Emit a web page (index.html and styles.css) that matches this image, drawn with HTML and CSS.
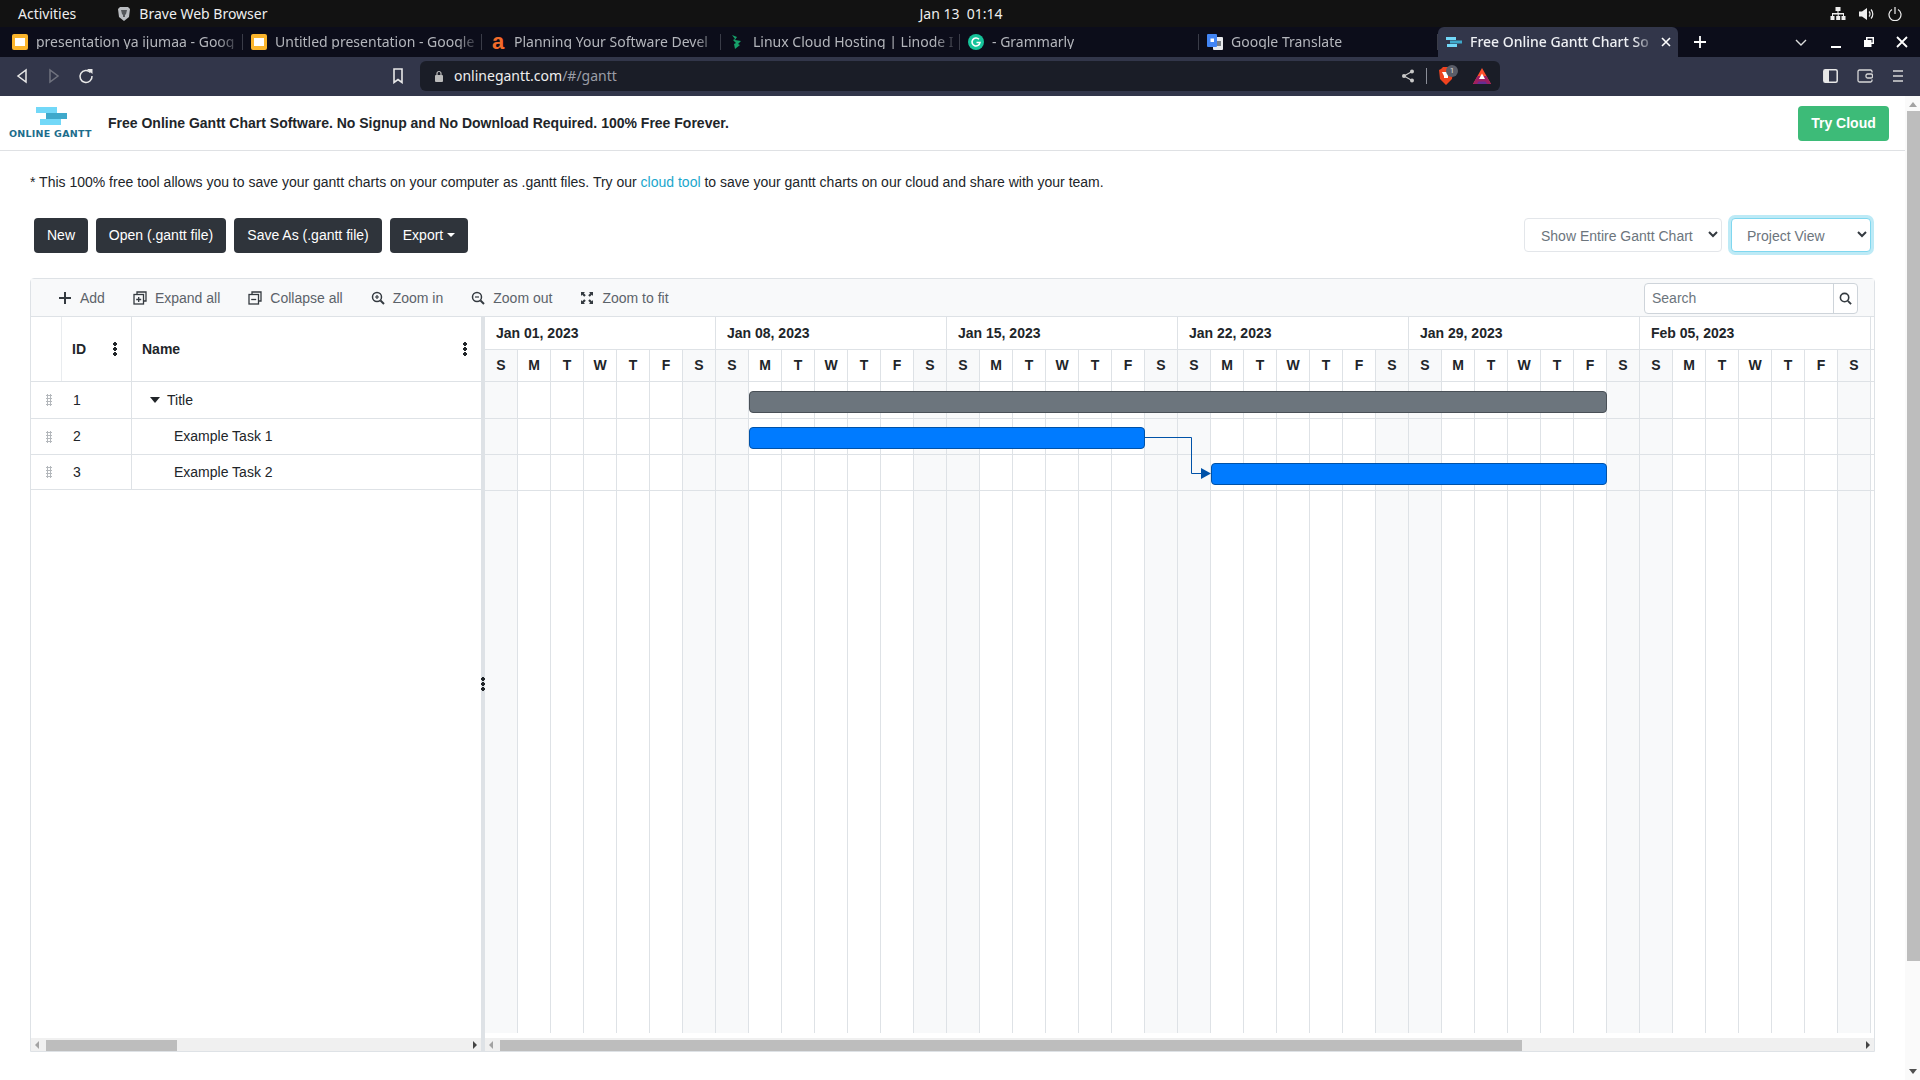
FILE: index.html
```html
<!DOCTYPE html>
<html lang="en">
<head>
<meta charset="utf-8">
<title>Free Online Gantt Chart Software</title>
<link rel="stylesheet" href="styles.css">
</head>
<body>
<div class="sysbar">
  <span class="activities">Activities</span>
  <span class="appname">
    <svg class="lion" viewBox="0 0 14 16"><path d="M3 1h8l2 2-1 8-5 4-5-4-1-8z" fill="#b9bcc0"/><path d="M4 4h6l-1 4-1 1v2H6V9L5 8z" fill="#55585c"/></svg>
    Brave Web Browser
  </span>
  <span class="clock">Jan 13&nbsp;&nbsp;01:14</span>
  <span class="status">
    <svg viewBox="0 0 16 14" width="16" height="14"><path d="M5.500 0h5v4h-2v2h5.500v3h1.500v4h-4V9h1.500V7.500H8.700V9h1.500v4h-4V9h1.500V7.500H3V9h1.500v4h-4V9H2V6h5.500V4h-2z" fill="#eee"/></svg>
    <svg viewBox="0 0 16 14" width="16" height="14"><path d="M0 4.500h3L8 1v12L3 9.500H0z" fill="#eee"/><path d="M10 4.500a3.500 3.500 0 0 1 0 5M12 2.500a6.500 6.500 0 0 1 0 9" fill="none" stroke="#eee" stroke-width="1.200"/></svg>
    <svg viewBox="0 0 14 14" width="14" height="14"><path d="M4 2.500a6 6 0 1 0 6 0M7 0v7" fill="none" stroke="#eee" stroke-width="1.200"/></svg>
  </span>
</div>

<div class="tabstrip">
  <div class="tab"><svg class="favicon" viewBox="0 0 16 16"><rect width="16" height="16" rx="2" fill="#fbb52c"/><rect x="3" y="4" width="10" height="8" fill="#fff"/></svg><span class="tab-title">presentation ya ijumaa - Goog</span></div>
  <div class="tab"><svg class="favicon" viewBox="0 0 16 16"><rect width="16" height="16" rx="2" fill="#fbb52c"/><rect x="3" y="4" width="10" height="8" fill="#fff"/></svg><span class="tab-title">Untitled presentation - Google</span></div>
  <div class="tab"><span class="favicon fav-a">a</span><span class="tab-title">Planning Your Software Devel</span></div>
  <div class="tab"><svg class="favicon" viewBox="0 0 16 16"><path d="M3 1l5 2-2 3 6 1-3 3 2 1-5 4-1-5 2-1-3-3 2-1z" fill="#17a06a"/></svg><span class="tab-title">Linux Cloud Hosting | Linode I</span></div>
  <div class="tab"><svg class="favicon" viewBox="0 0 16 16"><circle cx="8" cy="8" r="8" fill="#15c39a"/><path d="M11 5.300A4 4 0 1 0 12 8.500H8.500" fill="none" stroke="#fff" stroke-width="1.600"/></svg><span class="tab-title">- Grammarly</span></div>
  <div class="tab"><svg class="favicon" viewBox="0 0 16 16"><rect x="6" y="3" width="10" height="13" rx="1" fill="#e8eaed"/><rect width="10" height="13" rx="1" fill="#4285f4"/><rect x="3.500" y="4.500" width="3.500" height="3.500" fill="#fff"/><rect x="10" y="7" width="4" height="5" fill="#7a7f85"/></svg><span class="tab-title">Google Translate</span></div>
  <div class="tab tab-active">
    <svg class="favicon" viewBox="0 0 16 16"><rect x="0" y="3" width="10" height="3" fill="#72d8f8"/><rect x="4" y="6.500" width="12" height="3" fill="#3fa9cb"/><rect x="1" y="10" width="10" height="3" fill="#72d8f8"/></svg>
    <span class="tab-title">Free Online Gantt Chart So</span>
    <svg class="tab-close" viewBox="0 0 10 10"><path d="M1 1l8 8M9 1l-8 8" stroke="#fff" stroke-width="1.600"/></svg>
  </div>
  <svg class="newtab" viewBox="0 0 12 12"><path d="M6 0v12M0 6h12" stroke="#fff" stroke-width="1.800"/></svg>
  <div class="wincontrols">
    <svg class="win-chevron" width="12" height="12" viewBox="0 0 12 12"><path d="M1 4l5 5 5-5" fill="none" stroke="#ddd" stroke-width="1.400"/></svg>
    <svg width="12" height="12" viewBox="0 0 12 12"><path d="M1 11h10" stroke="#fff" stroke-width="2"/></svg>
    <svg width="12" height="12" viewBox="0 0 12 12"><path d="M3 1h8v7H8.500v3H1V4h2z M4.500 2.500V4h4v2.500h1v-4z" fill="#fff" fill-rule="evenodd"/></svg>
    <svg width="12" height="12" viewBox="0 0 12 12"><path d="M1 1l10 10M11 1L1 11" stroke="#fff" stroke-width="1.800"/></svg>
  </div>
</div>

<div class="navbar">
  <svg class="nav-ico back" viewBox="0 0 12 16"><path d="M10 2v12L2 8z" fill="none" stroke="#e8e8e8" stroke-width="1.500"/></svg>
  <svg class="nav-ico fwd" viewBox="0 0 12 16"><path d="M2 2v12l8-6z" fill="none" stroke="#70737f" stroke-width="1.500"/></svg>
  <svg class="nav-ico reload" viewBox="0 0 16 16"><path d="M12.500 4.500A6 6 0 1 0 14 8" fill="none" stroke="#e8e8e8" stroke-width="1.500"/><path d="M9 1h5.500v5z" fill="#e8e8e8"/></svg>
  <svg class="nav-ico bookmark" viewBox="0 0 12 16"><path d="M2 1h8v13.500l-4-3-4 3z" fill="none" stroke="#e8e8e8" stroke-width="1.600"/></svg>
  <div class="addressbar">
    <svg class="lock" viewBox="0 0 10 12"><path d="M3 5V3.500a2 2 0 0 1 4 0V5" fill="none" stroke="#bbb" stroke-width="1.200"/><rect x="1" y="5" width="8" height="7" rx="1" fill="#bbb"/></svg>
    <span class="url">onlinegantt.com<span class="url-dim">/#/gantt</span></span>
    <svg class="share" viewBox="0 0 14 14"><path d="M11 2.500L3 7l8 4.500" fill="none" stroke="#c8c8c8" stroke-width="1.200"/><circle cx="11" cy="2.500" r="2" fill="#c8c8c8"/><circle cx="3" cy="7" r="2" fill="#c8c8c8"/><circle cx="11" cy="11.500" r="2" fill="#c8c8c8"/></svg>
    <span class="addr-sep"></span>
    <span class="shield">
      <svg viewBox="0 0 14 18" width="14" height="18"><path d="M2 2l2-2h6l2 2 2 1-1 9-6 6-6-6-1-9z" fill="#f0431f"/><path d="M3 5h8L9 9v2H5V9z" fill="#fff"/></svg>
      <span class="badge">1</span>
    </span>
    <svg class="bat" viewBox="0 0 18 16"><path d="M9 0l9 16H0z" fill="#ff4f2b"/><path d="M0 16l4.500-8h9L18 16z" fill="#9e1f63"/><path d="M4 16l1.500-2.500h7L14 16z" fill="#662d91"/><path d="M9 5.500l3 5.500H6z" fill="#fff"/></svg>
  </div>
  <div class="nav-right">
    <svg width="15" height="14" viewBox="0 0 15 14"><rect x=".8" y=".8" width="13.400" height="12.400" rx="1.500" fill="none" stroke="#e8e8e8" stroke-width="1.500"/><rect x="1" y="1" width="5" height="12" fill="#e8e8e8"/></svg>
    <svg width="16" height="14" viewBox="0 0 16 14"><path d="M15 3.500V2.500A1.500 1.500 0 0 0 13.500 1h-11A1.500 1.500 0 0 0 1 2.500v9A1.500 1.500 0 0 0 2.500 13h11a1.500 1.500 0 0 0 1.500-1.500v-1" fill="none" stroke="#d8d8d8" stroke-width="1.300"/><rect x="9" y="5" width="6.500" height="4" rx="1.500" fill="none" stroke="#d8d8d8" stroke-width="1.300"/></svg>
    <svg width="12" height="14" viewBox="0 0 12 14"><path d="M1 2h10M1 7h10M1 12h10" stroke="#d8d8d8" stroke-width="1.600"/></svg>
  </div>
</div>

<div class="viewport">
  <main class="page">
    <header class="site-header">
      <div class="logo">
        <div class="logo-bars"><i class="lb lb1"></i><i class="lb lb2"></i><i class="lb lb3"></i></div>
        <span class="logo-text">ONLINE GANTT</span>
      </div>
      <strong class="tagline">Free Online Gantt Chart Software. No Signup and No Download Required. 100% Free Forever.</strong>
      <a class="try-cloud">Try Cloud</a>
    </header>

    <p class="note">* This 100% free tool allows you to save your gantt charts on your computer as .gantt files. Try our <a class="link">cloud tool</a> to save your gantt charts on our cloud and share with your team.</p>

    <div class="actions">
      <button class="btn">New</button>
      <button class="btn btn-open">Open (.gantt file)</button>
      <button class="btn btn-save">Save As (.gantt file)</button>
      <button class="btn btn-export">Export<i class="caret"></i></button>
      <div class="selects">
        <div class="select sel-range">Show Entire Gantt Chart<svg class="chev" viewBox="0 0 10 7"><path d="M1 1l4 4 4-4" fill="none" stroke="#343a40" stroke-width="2"/></svg></div>
        <div class="select sel-view">Project View<svg class="chev" viewBox="0 0 10 7"><path d="M1 1l4 4 4-4" fill="none" stroke="#343a40" stroke-width="2"/></svg></div>
      </div>
    </div>

    <section class="gantt">
      <div class="gantt-toolbar">
        <span class="tool"><svg class="ti" viewBox="0 0 14 14"><path d="M7 1v12M1 7h12" stroke="#343a40" stroke-width="2"/></svg>Add</span>
        <span class="tool"><svg class="ti" viewBox="0 0 14 14"><path d="M4 3V1h9v9h-2" fill="none" stroke="#343a40" stroke-width="1.300"/><rect x="1" y="3.500" width="9.500" height="9.500" fill="none" stroke="#343a40" stroke-width="1.300"/><path d="M5.700 6v5M3.200 8.500h5" stroke="#343a40" stroke-width="1.300"/></svg>Expand all</span>
        <span class="tool"><svg class="ti" viewBox="0 0 14 14"><path d="M4 3V1h9v9h-2" fill="none" stroke="#343a40" stroke-width="1.300"/><rect x="1" y="3.500" width="9.500" height="9.500" fill="none" stroke="#343a40" stroke-width="1.300"/><path d="M3.200 8.500h5" stroke="#343a40" stroke-width="1.300"/></svg>Collapse all</span>
        <span class="tool"><svg class="ti" viewBox="0 0 14 14"><circle cx="6" cy="6" r="4.500" fill="none" stroke="#343a40" stroke-width="1.500"/><path d="M9.500 9.500L13 13" stroke="#343a40" stroke-width="2"/><path d="M6 4v4M4 6h4" stroke="#343a40" stroke-width="1.200"/></svg>Zoom in</span>
        <span class="tool"><svg class="ti" viewBox="0 0 14 14"><circle cx="6" cy="6" r="4.500" fill="none" stroke="#343a40" stroke-width="1.500"/><path d="M9.500 9.500L13 13" stroke="#343a40" stroke-width="2"/><path d="M4 6h4" stroke="#343a40" stroke-width="1.200"/></svg>Zoom out</span>
        <span class="tool"><svg class="ti" viewBox="0 0 14 14"><path d="M1 1h4L3.800 2.200l2 2-1.600 1.600-2-2L1 5zM13 1v4l-1.200-1.200-2 2-1.600-1.600 2-2L9 1zM1 13V9l1.200 1.200 2-2 1.600 1.600-2 2L5 13zM13 13H9l1.200-1.200-2-2 1.600-1.600 2 2L13 9z" fill="#343a40"/></svg>Zoom to fit</span>
        <div class="search">
          <span class="search-input">Search</span>
          <span class="search-btn"><svg viewBox="0 0 14 14" width="13" height="13"><circle cx="6" cy="6" r="4.500" fill="none" stroke="#343a40" stroke-width="1.700"/><path d="M9.500 9.500L13 13" stroke="#343a40" stroke-width="2"/></svg></span>
        </div>
      </div>

      <div class="gantt-main">
        <div class="task-panel">
          <div class="task-head">
            <div class="c-drag"></div>
            <div class="c-id"><b>ID</b><i class="kebab"></i></div>
            <div class="c-name"><b>Name</b><i class="kebab"></i></div>
          </div>
          <div class="task-row r1">
            <div class="c-drag"><i class="grip"></i></div>
            <div class="c-id">1</div>
            <div class="c-name name-parent"><i class="tri"></i>Title</div>
          </div>
          <div class="task-row r2">
            <div class="c-drag"><i class="grip"></i></div>
            <div class="c-id">2</div>
            <div class="c-name name-child">Example Task 1</div>
          </div>
          <div class="task-row r3">
            <div class="c-drag"><i class="grip"></i></div>
            <div class="c-id">3</div>
            <div class="c-name name-child">Example Task 2</div>
          </div>
          <div class="panel-fill"></div>
          <div class="hscroll">
            <i class="arrow-l"></i><span class="thumb thumb-left"></span><span class="fill"></span><i class="arrow-r"></i>
          </div>
        </div>

        <div class="splitter"><i class="kebab kebab-split"></i></div>

        <div class="timeline">
          <div class="tl-head">
            <div class="month">Jan 01, 2023</div><div class="month">Jan 08, 2023</div><div class="month">Jan 15, 2023</div><div class="month">Jan 22, 2023</div><div class="month">Jan 29, 2023</div><div class="month">Feb 05, 2023</div>
            <div class="day we">S</div><div class="day">M</div><div class="day">T</div><div class="day">W</div><div class="day">T</div><div class="day">F</div><div class="day we">S</div>
            <div class="day we">S</div><div class="day">M</div><div class="day">T</div><div class="day">W</div><div class="day">T</div><div class="day">F</div><div class="day we">S</div>
            <div class="day we">S</div><div class="day">M</div><div class="day">T</div><div class="day">W</div><div class="day">T</div><div class="day">F</div><div class="day we">S</div>
            <div class="day we">S</div><div class="day">M</div><div class="day">T</div><div class="day">W</div><div class="day">T</div><div class="day">F</div><div class="day we">S</div>
            <div class="day we">S</div><div class="day">M</div><div class="day">T</div><div class="day">W</div><div class="day">T</div><div class="day">F</div><div class="day we">S</div>
            <div class="day we">S</div><div class="day">M</div><div class="day">T</div><div class="day">W</div><div class="day">T</div><div class="day">F</div><div class="day we">S</div>
          </div>
          <div class="tl-body">
            <div class="tl-row h37"></div>
            <div class="tl-row h36"></div>
            <div class="tl-row h36"></div>
            <div class="bar bar-parent"></div>
            <div class="bar bar-t1"></div>
            <div class="bar bar-t2"></div>
            <svg class="link-line" viewBox="0 0 70 50"><path d="M0 .5h46.500v36H56" fill="none" stroke="#0052a8" stroke-width="1"/><path d="M56 31l10 5.500-10 5.500z" fill="#0052a8"/></svg>
          </div>
          <div class="tl-gap"></div>
          <div class="hscroll">
            <i class="arrow-l"></i><span class="thumb thumb-right"></span><span class="fill"></span><i class="arrow-r"></i>
          </div>
        </div>
      </div>
    </section>
  </main>
  <aside class="page-scroll">
    <i class="ps-up"></i>
    <span class="ps-thumb"></span>
    <span class="fill"></span>
    <i class="ps-down"></i>
  </aside>
</div>
</body>
</html>
```
FILE: styles.css
```css
* { box-sizing: border-box; }
html, body { margin: 0; padding: 0; }
body {
  width: 1920px; height: 1080px; overflow: hidden;
  display: flex; flex-direction: column;
  font: 14px/1.5 "Liberation Sans", Arial, sans-serif;
  color: #212529; background: #fff;
}

/* system bar */
.sysbar {
  height: 27px; flex: none; background: #121212; color: #eee;
  display: flex; align-items: center;
  font: 14px/1 "Noto Sans", Roboto, sans-serif;
}
.activities { margin-left: 18px; }
.appname { margin-left: 41px; display: flex; align-items: center; gap: 8px; }
.lion { width: 14px; height: 16px; }
.clock { margin-left: 652px; color: #eee; }
.status { margin-left: auto; margin-right: 18px; display: flex; gap: 13px; align-items: center; }

/* tabs */
.tabstrip {
  height: 30px; flex: none; background: #0c0d1a;
  display: flex; align-items: center; padding-left: 4px;
  font: 14px/1 "Noto Sans", Roboto, sans-serif;
}
.tab {
  width: 239px; height: 30px; flex: none; display: flex; align-items: center;
  padding-left: 8px; gap: 8px; color: #b4b6bc; position: relative;
}
.tab::after {
  content: ""; position: absolute; right: 0; top: 7px; height: 16px; width: 1px; background: #3a3c48;
}
.favicon { width: 16px; height: 16px; flex: none; }
.fav-a { color: #f26b2a; font: 700 22px/16px "Liberation Sans", sans-serif; text-align: center; }
.tab-title {
  white-space: nowrap; width: 206px;
  -webkit-mask-image: linear-gradient(90deg, #000 88%, transparent 100%);
  mask-image: linear-gradient(90deg, #000 88%, transparent 100%);
}
.tab-active {
  width: 240px; background: #32364a; border-radius: 6px 6px 0 0; color: #eef0f4; font-weight: 500;
}
.tab-active::after { display: none; }
.tab-active .tab-title { width: 186px; }
.tab-close { width: 10px; height: 10px; flex: none; margin-left: -3px; }
.newtab { width: 12px; height: 12px; margin-left: 16px; flex: none; }
.wincontrols { margin-left: auto; margin-right: 12px; display: flex; gap: 21px; align-items: center; }
.win-chevron { margin-right: 2px; }

/* nav bar */
.navbar {
  height: 39px; flex: none; background: #32364a; display: flex; align-items: center; padding-bottom: 1px;
  font: 14px/1 "Noto Sans", Roboto, sans-serif;
}
.nav-ico { height: 16px; width: 12px; flex: none; }
.back { margin-left: 16px; }
.fwd { margin-left: 20px; }
.reload { margin-left: 18px; width: 16px; }
.bookmark { margin-left: 298px; }
.addressbar {
  width: 1080px; height: 30px; margin-left: 16px; background: #1a1d27; border-radius: 6px;
  display: flex; align-items: center; padding-left: 14px; color: #eee;
}
.lock { width: 10px; height: 12px; flex: none; }
.url { margin-left: 10px; }
.url-dim { color: #9a9da6; }
.share { width: 14px; height: 14px; margin-left: auto; flex: none; }
.addr-sep { width: 1px; height: 16px; background: #8b8e98; margin-left: 11px; }
.shield { position: relative; margin-left: 12px; width: 14px; height: 18px; display: block; }
.badge {
  position: absolute; left: 7px; top: -2px; width: 12px; height: 12px; border-radius: 50%;
  background: #5a5d68; color: #ddd; font: 8px/12px Roboto, sans-serif; text-align: center;
}
.bat { width: 18px; height: 16px; margin-left: 20px; margin-right: 9px; flex: none; }
.nav-right { margin-left: auto; margin-right: 16px; display: flex; gap: 19px; align-items: center; }

/* viewport */
.viewport { flex: 1; display: flex; min-height: 0; }
.page { flex: 1; min-width: 0; display: flex; flex-direction: column; }

.site-header {
  height: 55px; flex: none; display: flex; align-items: center; border-bottom: 1px solid #dfe1e4;
  padding: 0 16px 0 9px;
}
.logo { width: 81px; display: flex; flex-direction: column; height: 34px; }
.logo-bars { display: flex; flex-direction: column; height: 19px; margin-left: 27px; margin-top: 1px; }
.lb { display: block; height: 5.500px; width: 21px; }
.lb1 { background: #72d8f8; }
.lb2 { background: #3fa9cb; margin-left: 10px; margin-top: .5px; }
.lb3 { background: #72d8f8; margin-left: 4px; margin-top: .5px; }
.logo-text {
  font: 700 9.500px/10px "DejaVu Sans", sans-serif; letter-spacing: .25px; color: #1d6d8c; white-space: nowrap; margin-top: 3px;
}
.tagline { margin-left: 18px; font-weight: 700; }
.try-cloud {
  margin-left: auto; width: 91px; height: 35px; background: #3dbb78; color: #fff; border-radius: 4px;
  font-weight: 700; text-align: center; line-height: 35px;
}

.note { margin: 21px 0 0 30px; height: 21px; line-height: 21px; }
.link { color: #1ba6cc; }

.actions { margin: 25px 0 0 34px; display: flex; gap: 8px; height: 35px; width: 1837px; }
.btn {
  height: 35px; width: 54px; padding: 0; background: #2f343b; color: #fff; border: 0; border-radius: 4px;
  font: 14px/35px "Liberation Sans", sans-serif;
}
.btn-open { width: 130px; }
.btn-save { width: 148px; }
.btn-export { width: 78px; }
.caret {
  display: inline-block; margin-left: 4px; vertical-align: 3px;
  border: 4px solid transparent; border-top-color: #fff; border-bottom: 0;
}
.selects { margin-left: auto; display: flex; gap: 9px; height: 34px; }
.select {
  height: 34px; position: relative; background: #fff; border: 1px solid #e3e6ea; border-radius: 4px;
  color: #6c757d; line-height: 34px; padding-left: 16px;
}
.sel-range { width: 198px; }
.sel-view {
  width: 140px; padding-left: 15px; border-color: #80d7ef; box-shadow: 0 0 0 3px #bdeaf6;
}
.chev { position: absolute; right: 3px; top: 12px; width: 10px; height: 7px; }

/* gantt */
.gantt {
  margin: 25px 0 0 30px; width: 1845px; height: 774px; flex: none;
  border: 1px solid #dee2e6; border-top-left-radius: 4px; border-top-right-radius: 4px;
  display: flex; flex-direction: column;
}
.gantt-toolbar {
  height: 38px; flex: none; background: #f8f9fa; border-bottom: 1px solid #dee2e6;
  display: flex; align-items: center; padding: 1px 16px 0 27px; gap: 28px; color: #5c636a;
}
.tool { display: flex; align-items: center; gap: 8px; white-space: nowrap; }
.ti { width: 14px; height: 14px; flex: none; }
.search {
  margin-left: auto; width: 214px; height: 31px; display: flex; background: #fff;
  border: 1px solid #ced4da; border-radius: 4px;
}
.search-input { flex: 1; padding-left: 7px; color: #6c757d; line-height: 29px; }
.search-btn {
  width: 24px; border-left: 1px solid #ced4da; display: flex; align-items: center; justify-content: center;
}

.gantt-main { flex: 1; display: flex; min-height: 0; }
.task-panel { width: 450px; flex: none; display: flex; flex-direction: column; }
.task-head, .task-row { display: flex; border-bottom: 1px solid #dee2e6; flex: none; }
.task-head { height: 65px; }
.r1 { height: 37px; }
.r2 { height: 36px; }
.r3 { height: 35px; }
.c-drag { width: 31px; border-right: 1px solid #e9ecef; flex: none; display: flex; align-items: center; justify-content: center; }
.task-row .c-drag { border-right: 0; padding-left: 4px; }
.c-id {
  width: 70px; flex: none; border-right: 1px solid #dee2e6; display: flex; align-items: center;
  justify-content: space-between; padding: 0 14px 0 10px;
}
.c-name {
  flex: 1; display: flex; align-items: center; justify-content: space-between; padding: 0 14px 0 10px;
}
.task-row .c-id { justify-content: flex-start; padding-left: 11px; }
.task-row .name-parent { justify-content: flex-start; padding-left: 18px; }
.task-row .name-child { justify-content: flex-start; padding-left: 42px; }
.tri {
  width: 0; height: 0; margin-right: 7px; border: 5px solid transparent; border-top: 6px solid #212529; border-bottom: 0;
}
.grip {
  width: 6px; height: 12px; display: block;
  background-image: radial-gradient(circle, #b4b8bc 1px, transparent 1.100px);
  background-size: 3px 3px;
}
.kebab {
  display: block; width: 4px; height: 14px; flex: none;
  background: radial-gradient(circle at 2px 2px, #212529 1.700px, transparent 2px) 0 0/4px 5px repeat-y;
}
.panel-fill { flex: 1; }

.splitter { width: 4px; flex: none; background: #dee2e6; position: relative; }
.kebab-split { position: absolute; left: 0; top: 360px; }

.timeline { flex: 1; min-width: 0; display: flex; flex-direction: column; }
.tl-head {
  display: grid; grid-template-columns: repeat(42, 33px); grid-template-rows: 33px 32px; flex: none;
  background:
    linear-gradient(#dee2e6, #dee2e6) 0 32px/100% 1px no-repeat,
    linear-gradient(#dee2e6, #dee2e6) 0 64px/100% 1px no-repeat;
}
.month {
  grid-column: span 7; border-right: 1px solid #dee2e6; border-bottom: 1px solid #dee2e6;
  font-weight: 700; padding-left: 11px; line-height: 32px;
}
.day {
  border-right: 1px solid #dee2e6; border-bottom: 1px solid #dee2e6; text-align: center;
  font-weight: 700; line-height: 31px;
}
.we { background: #f8f9fa; }
.tl-body {
  height: 651px; flex: none; position: relative;
  background:
    repeating-linear-gradient(90deg, transparent 0 32px, #dee2e6 32px 33px) 0 0/1386px 100% no-repeat,
    repeating-linear-gradient(90deg, #f8f9fa 0 33px, transparent 33px 198px, #f8f9fa 198px 231px) 0 0/1386px 100% no-repeat;
}
.tl-row { border-bottom: 1px solid #dee2e6; }
.h37 { height: 37px; }
.h36 { height: 36px; }
.tl-gap { height: 5px; flex: none; }
.bar { position: absolute; height: 22px; border-radius: 4px; }
.bar-parent { left: 264px; top: 9px; width: 858px; background: #6c757d; border: 1px solid #495057; }
.bar-t1 { left: 264px; top: 45px; width: 396px; background: #007bff; border: 1px solid #0052a8; }
.bar-t2 { left: 726px; top: 81px; width: 396px; background: #007bff; border: 1px solid #0052a8; }
.link-line { position: absolute; left: 660px; top: 55px; width: 70px; height: 50px; }

.hscroll {
  height: 13px; flex: none; background: #f0f0f0; display: flex; align-items: flex-end;
}
.arrow-l, .arrow-r { width: 0; height: 0; align-self: center; border: 4px solid transparent; border-left-width: 0; border-right-width: 0; }
.arrow-l { border-right: 4px solid #a3a3a3; margin-left: 4px; }
.arrow-r { border-left: 4px solid #444; margin-right: 4px; }
.thumb { height: 11px; background: #bdbdbd; display: block; flex: none; }
.thumb-left { width: 131px; margin-left: 7px; }
.thumb-right { width: 1022px; margin-left: 7px; }
.fill { flex: 1; }

.page-scroll {
  width: 15px; flex: none; background: #fafafa; display: flex; flex-direction: column; align-items: center;
}
.ps-up { margin-top: 6px; border: 4px solid transparent; border-top: 0; border-bottom: 5px solid #a3a3a3; }
.ps-thumb { width: 13px; height: 850px; margin-top: 4px; margin-left: 1px; background: #bdbdbd; display: block; }
.ps-down { margin-bottom: 6px; border: 4px solid transparent; border-bottom: 0; border-top: 5px solid #505050; }
```
